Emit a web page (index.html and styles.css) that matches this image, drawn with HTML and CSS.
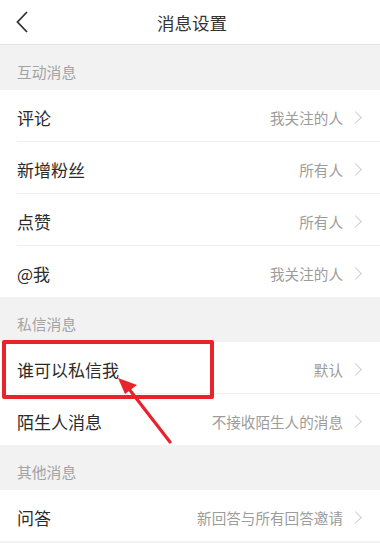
FILE: index.html
```html
<!DOCTYPE html>
<html lang="zh">
<head>
<meta charset="utf-8">
<link rel="stylesheet" href="styles.css">
</head>
<body>
<div class="page">
  <header class="topbar">
    <svg class="back" width="12" height="22" viewBox="0 0 12 22"><path d="M11 1 L1.5 11 L11 21" fill="none" stroke="#333" stroke-width="1.8" stroke-linejoin="miter"/></svg>
    <div class="title">消息设置</div>
  </header>

  <div class="section">互动消息</div>
  <div class="group">
    <div class="row"><span class="label">评论</span><span class="value">我关注的人</span><span class="chev"></span></div>
    <div class="row"><span class="label">新增粉丝</span><span class="value">所有人</span><span class="chev"></span></div>
    <div class="row"><span class="label">点赞</span><span class="value">所有人</span><span class="chev"></span></div>
    <div class="row"><span class="label">@我</span><span class="value">我关注的人</span><span class="chev"></span></div>
  </div>

  <div class="section">私信消息</div>
  <div class="group">
    <div class="row"><span class="label">谁可以私信我</span><span class="value">默认</span><span class="chev"></span></div>
    <div class="row"><span class="label">陌生人消息</span><span class="value">不接收陌生人的消息</span><span class="chev"></span></div>
  </div>

  <div class="section">其他消息</div>
  <div class="group">
    <div class="row"><span class="label">问答</span><span class="value">新回答与所有回答邀请</span><span class="chev"></span></div>
  </div>

  <div class="highlight"></div>
  <svg class="arrow" width="380" height="543" viewBox="0 0 380 543">
    <line x1="129" y1="389" x2="170" y2="442" stroke="#e8232b" stroke-width="3.2" stroke-linecap="round"/>
    <polygon points="118,378 137,385 125,394" fill="#e8232b"/>
  </svg>
</div>
</body>
</html>
```
FILE: styles.css
```css
* { box-sizing: border-box; }
html, body { margin: 0; padding: 0; }
body {
  width: 380px;
  height: 543px;
  overflow: hidden;
  background: #f2f2f2;
  font-family: "Noto Sans CJK SC", "Noto Sans", sans-serif;
}
.page { position: relative; width: 380px; height: 543px; }
.topbar {
  height: 45px;
  background: #fff;
  border-bottom: 1px solid #e3e3e3;
  display: flex;
  align-items: center;
  justify-content: center;
  position: relative;
}
.back { position: absolute; left: 16px; top: 11px; }
.title { font-size: 17.5px; color: #333; padding: 2px 0 0 4px; line-height: 1; }
.section {
  height: 45px;
  display: flex;
  align-items: center;
  padding: 7px 0 0 17px;
  font-size: 14.8px;
  color: #a3a3a3;
}
.group { background: #fff; padding-left: 17px; }
.row {
  height: 52px;
  display: flex;
  align-items: center;
  padding: 3px 20px 0 0;
  border-bottom: 1px solid #efefef;
}
.group .row:last-child { border-bottom: none; height: 51px; }
.group:last-of-type .row:last-child { border-bottom: 1px solid #efefef; height: 52px; }
.label { font-size: 17px; color: #2b2b2b; flex: 1; }
.value { font-size: 14.6px; color: #9c9c9c; margin-right: 8px; }
.chev {
  width: 9px; height: 9px;
  border-top: 1.3px solid #cccccc;
  border-right: 1.3px solid #cccccc;
  transform: rotate(45deg);
}
.highlight {
  position: absolute;
  left: 2px; top: 340px;
  width: 212px; height: 59px;
  border: 4px solid #e8232b;
  border-radius: 2px;
}
.arrow { position: absolute; left: 0; top: 0; pointer-events: none; }
```
